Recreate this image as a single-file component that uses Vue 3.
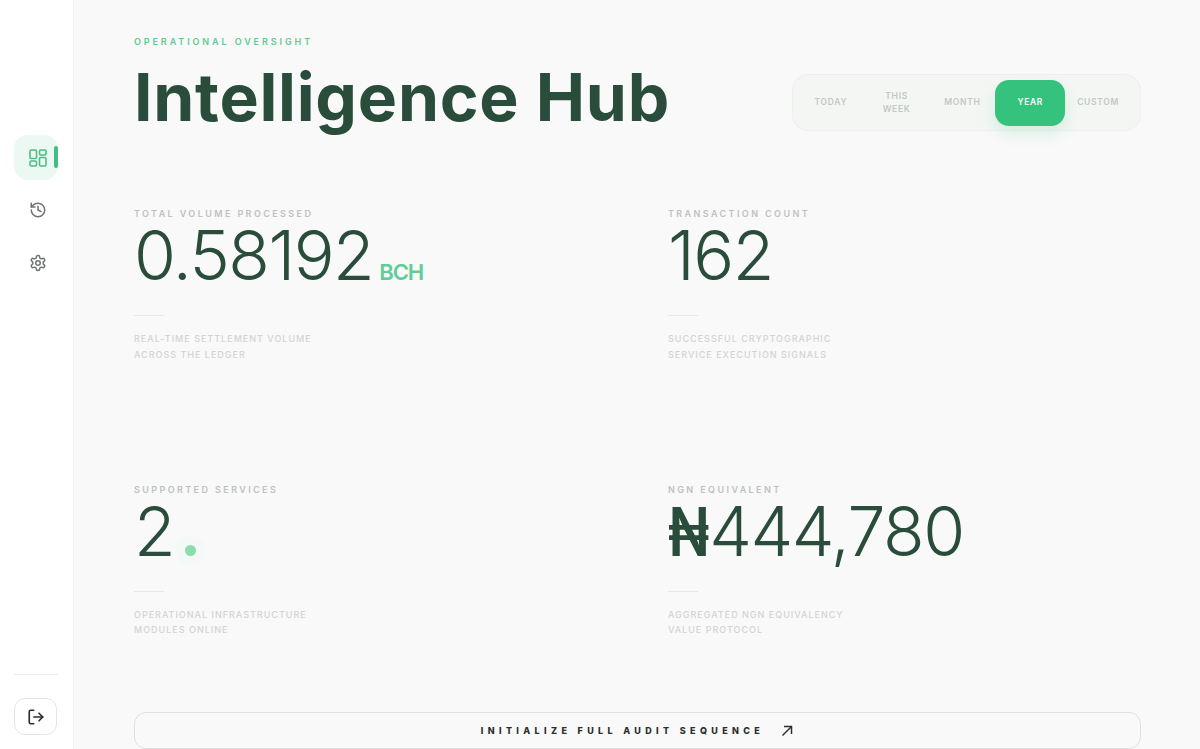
<script setup>
const ranges = [
  { label: "Today" },
  { label: "This Week" },
  { label: "Month" },
  { label: "Year", active: true },
  { label: "Custom" },
];

const stats = [
  {
    label: "Total Volume Processed",
    value: "0.58192",
    unit: "BCH",
    note: ["Real-time settlement volume", "across the ledger"],
  },
  {
    label: "Transaction Count",
    value: "162",
    note: ["Successful cryptographic", "service execution signals"],
  },
  {
    label: "Supported Services",
    value: "2",
    dot: true,
    note: ["Operational infrastructure", "modules online"],
  },
  {
    label: "NGN Equivalent",
    prefix: "₦",
    value: "444,780",
    note: ["Aggregated NGN equivalency", "value protocol"],
  },
];
</script>

<template>
  <div class="shell">
    <aside class="sidebar">
      <nav class="nav">
        <button class="nav-btn nav-btn--active">
          <svg width="20" height="20" viewBox="0 0 20 20" fill="none" stroke="currentColor" stroke-width="1.6" stroke-linejoin="round">
            <rect x="2" y="2" width="6.5" height="8.5" rx="1.2" />
            <rect x="11.5" y="2" width="6.5" height="5" rx="1.2" />
            <rect x="2" y="13" width="6.5" height="5" rx="1.2" />
            <rect x="11.5" y="9.5" width="6.5" height="8.5" rx="1.2" />
          </svg>
          <span class="nav-marker"></span>
        </button>
        <button class="nav-btn">
          <svg width="18" height="18" viewBox="0 0 24 24" fill="none" stroke="currentColor" stroke-width="2" stroke-linecap="round" stroke-linejoin="round">
            <path d="M3 12a9 9 0 1 0 9-9 9.75 9.75 0 0 0-6.74 2.74L3 8" />
            <path d="M3 3v5h5" />
            <path d="M12 7v5l4 2" />
          </svg>
        </button>
        <button class="nav-btn">
          <svg width="18" height="18" viewBox="0 0 24 24" fill="none" stroke="currentColor" stroke-width="2" stroke-linecap="round" stroke-linejoin="round">
            <path d="M12.22 2h-.44a2 2 0 0 0-2 2v.18a2 2 0 0 1-1 1.73l-.43.25a2 2 0 0 1-2 0l-.15-.08a2 2 0 0 0-2.73.73l-.22.38a2 2 0 0 0 .73 2.73l.15.1a2 2 0 0 1 1 1.72v.51a2 2 0 0 1-1 1.74l-.15.09a2 2 0 0 0-.73 2.73l.22.38a2 2 0 0 0 2.73.73l.15-.08a2 2 0 0 1 2 0l.43.25a2 2 0 0 1 1 1.73V20a2 2 0 0 0 2 2h.44a2 2 0 0 0 2-2v-.18a2 2 0 0 1 1-1.73l.43-.25a2 2 0 0 1 2 0l.15.08a2 2 0 0 0 2.73-.73l.22-.39a2 2 0 0 0-.73-2.73l-.15-.08a2 2 0 0 1-1-1.74v-.5a2 2 0 0 1 1-1.74l.15-.09a2 2 0 0 0 .73-2.73l-.22-.38a2 2 0 0 0-2.73-.73l-.15.08a2 2 0 0 1-2 0l-.43-.25a2 2 0 0 1-1-1.73V4a2 2 0 0 0-2-2z" />
            <circle cx="12" cy="12" r="3" />
          </svg>
        </button>
      </nav>
      <div class="sidebar-foot">
        <div class="foot-rule"></div>
        <button class="logout">
          <svg width="18" height="18" viewBox="0 0 24 24" fill="none" stroke="currentColor" stroke-width="2.2" stroke-linecap="round" stroke-linejoin="round">
            <path d="M9 21H5a2 2 0 0 1-2-2V5a2 2 0 0 1 2-2h4" />
            <path d="M16 17l5-5-5-5" />
            <path d="M21 12H9" />
          </svg>
        </button>
      </div>
    </aside>

    <main class="main">
      <header class="header">
        <div>
          <p class="eyebrow">Operational Oversight</p>
          <h1 class="title">Intelligence Hub</h1>
        </div>
        <div class="ranges">
          <button
            v-for="r in ranges"
            :key="r.label"
            class="range"
            :class="{ 'range--active': r.active }"
          >
            {{ r.label }}
          </button>
        </div>
      </header>

      <section class="stats">
        <div v-for="s in stats" :key="s.label" class="stat">
          <p class="stat-label">{{ s.label }}</p>
          <div class="stat-value">
            <span v-if="s.prefix" class="stat-prefix">{{ s.prefix }}</span>
            <span>{{ s.value }}</span>
            <span v-if="s.unit" class="stat-unit">{{ s.unit }}</span>
            <span v-if="s.dot" class="stat-dot"></span>
          </div>
          <div class="stat-rule"></div>
          <p class="stat-note">{{ s.note[0] }}<br />{{ s.note[1] }}</p>
        </div>
      </section>

      <button class="audit">
        <span>Initialize Full Audit Sequence</span>
        <svg width="14" height="14" viewBox="0 0 14 14" fill="none" stroke="currentColor" stroke-width="1.5">
          <path d="M2.5 11.5L11.5 2.5" />
          <path d="M4 2.5h7.5V10" />
        </svg>
      </button>
    </main>
  </div>
</template>

<style>
html,
body {
  margin: 0;
  background: #f9f9f9;
}
</style>

<style scoped>
.shell {
  display: flex;
  height: 749px;
  overflow: hidden;
  font-family: Inter, "Liberation Sans", sans-serif;
  background: #f9f9f9;
}
button {
  font-family: inherit;
  cursor: pointer;
}
p,
h1 {
  margin: 0;
}
.sidebar {
  width: 74px;
  flex: none;
  box-sizing: border-box;
  background: #fff;
  border-right: 1px solid #f0f1f0;
  display: flex;
  flex-direction: column;
  justify-content: space-between;
  padding: 135px 0 14px 14px;
}
.nav {
  display: flex;
  flex-direction: column;
  gap: 7.5px;
}
.nav-btn {
  position: relative;
  width: 44px;
  height: 45px;
  border: 0;
  background: none;
  border-radius: 14px;
  color: #6c7571;
  display: flex;
  align-items: center;
  justify-content: center;
  padding: 0 0 0 4px;
}
.nav-btn--active {
  background: #ecf9f2;
  color: #4fbd83;
}
.nav-marker {
  position: absolute;
  right: 0;
  top: 11px;
  width: 4px;
  height: 22px;
  border-radius: 2px;
  background: #3cc07f;
}
.sidebar-foot {
  display: flex;
  flex-direction: column;
  align-items: flex-start;
  gap: 23px;
}
.foot-rule {
  width: 44px;
  height: 1px;
  background: #e8eeea;
}
.logout {
  width: 43px;
  height: 37px;
  border: 1px solid #e4e6e5;
  border-radius: 11px;
  background: #fff;
  color: #2a2f2d;
  display: flex;
  align-items: center;
  justify-content: center;
  padding: 0;
}
.main {
  flex: 1;
  min-width: 0;
  padding: 36px 59px 0 60px;
  display: flex;
  flex-direction: column;
}
.header {
  display: flex;
  justify-content: space-between;
  align-items: center;
}
.eyebrow {
  font-size: 9px;
  line-height: 11px;
  font-weight: 600;
  letter-spacing: 2.9px;
  text-transform: uppercase;
  color: #5fcb94;
}
.title {
  margin-top: 5px;
  font-size: 66px;
  line-height: 90px;
  font-weight: 700;
  letter-spacing: 0.75px;
  color: #2a4c3a;
}
.ranges {
  display: flex;
  align-items: center;
  box-sizing: border-box;
  width: 349px;
  height: 57px;
  padding: 5px 9px 5px 5px;
  margin-top: 27px;
  border: 1px solid #eef0ee;
  border-radius: 16px;
  background: #f4f6f4;
}
.range {
  flex: 1 1 0;
  height: 46px;
  border: 0;
  background: none;
  border-radius: 14px;
  padding: 0 10px;
  font-size: 8.5px;
  line-height: 13px;
  font-weight: 600;
  letter-spacing: 0.7px;
  text-transform: uppercase;
  color: #c2c8c4;
}
.range--active {
  flex: none;
  width: 70px;
  background: #34c27c;
  color: #fff;
  box-shadow: 0 8px 16px rgba(52, 194, 124, 0.16);
}
.stats {
  display: grid;
  grid-template-columns: 473px 473px;
  grid-template-rows: 275.5px auto;
  column-gap: 61px;
  margin-top: 66px;
}
.stat-label {
  font-size: 9px;
  line-height: 11px;
  font-weight: 600;
  letter-spacing: 2.4px;
  text-transform: uppercase;
  color: #bcc3bf;
}
.stat-value {
  display: flex;
  align-items: baseline;
  margin-top: 2px;
  font-size: 68px;
  line-height: 68px;
  font-weight: 300;
  letter-spacing: -1.5px;
  color: #2a4c3a;
}
.stat-prefix {
  display: inline-block;
  font-weight: 600;
  transform: scaleX(0.8);
  transform-origin: left center;
  margin-right: -9px;
}
.stat-unit {
  margin-left: 6px;
  font-size: 22px;
  line-height: 1;
  font-weight: 600;
  letter-spacing: -1.2px;
  color: #62cc98;
}
.stat-dot {
  width: 11px;
  height: 11px;
  margin-left: 11px;
  border-radius: 50%;
  background: #8cdcae;
  box-shadow: 0 0 0 9px rgba(140, 220, 174, 0.04);
}
.stat-rule {
  width: 30px;
  height: 1px;
  margin-top: 26px;
  background: #e3e9e5;
}
.stat-note {
  margin-top: 15px;
  font-size: 9px;
  line-height: 15.5px;
  font-weight: 500;
  letter-spacing: 1px;
  text-transform: uppercase;
  color: #d0d5d2;
}
.audit {
  flex: none;
  box-sizing: border-box;
  height: 37px;
  margin-top: auto;
  border: 1px solid #dfe1e0;
  border-radius: 12px;
  background: #f9f9f9;
  display: flex;
  align-items: center;
  justify-content: center;
  gap: 16px;
  color: #2b2f2d;
  font-size: 9px;
  font-weight: 800;
  letter-spacing: 4.35px;
  text-transform: uppercase;
}
</style>
